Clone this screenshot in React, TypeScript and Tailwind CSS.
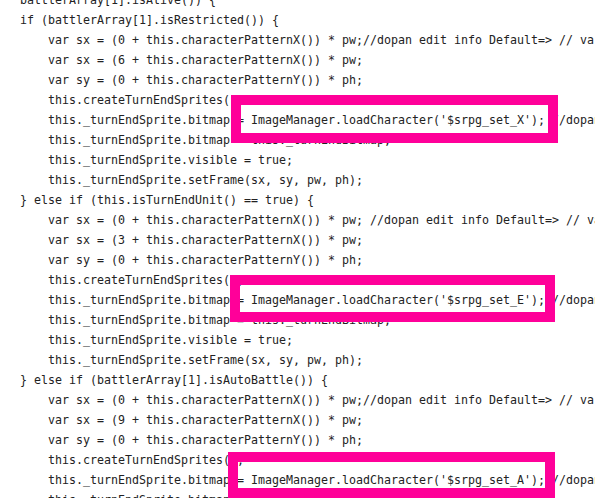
const lines: string[] = [
  "battlerArray[1].isAlive()) {",
  "if (battlerArray[1].isRestricted()) {",
  "    var sx = (0 + this.characterPatternX()) * pw;//dopan edit info Default=> // var sx = (0 + this.characterPatternX()) * pw;",
  "    var sx = (6 + this.characterPatternX()) * pw;",
  "    var sy = (0 + this.characterPatternY()) * ph;",
  "    this.createTurnEndSprites();",
  "    this._turnEndSprite.bitmap = ImageManager.loadCharacter('$srpg_set_X'); //dopan edit info",
  "    this._turnEndSprite.bitmap = this._turnEndBitmap;",
  "    this._turnEndSprite.visible = true;",
  "    this._turnEndSprite.setFrame(sx, sy, pw, ph);",
  "} else if (this.isTurnEndUnit() == true) {",
  "    var sx = (0 + this.characterPatternX()) * pw; //dopan edit info Default=> // var sx",
  "    var sx = (3 + this.characterPatternX()) * pw;",
  "    var sy = (0 + this.characterPatternY()) * ph;",
  "    this.createTurnEndSprites();",
  "    this._turnEndSprite.bitmap = ImageManager.loadCharacter('$srpg_set_E'); //dopan edit info",
  "    this._turnEndSprite.bitmap = this._turnEndBitmap;",
  "    this._turnEndSprite.visible = true;",
  "    this._turnEndSprite.setFrame(sx, sy, pw, ph);",
  "} else if (battlerArray[1].isAutoBattle()) {",
  "    var sx = (0 + this.characterPatternX()) * pw;//dopan edit info Default=> // var sx",
  "    var sx = (9 + this.characterPatternX()) * pw;",
  "    var sy = (0 + this.characterPatternY()) * ph;",
  "    this.createTurnEndSprites();",
  "    this._turnEndSprite.bitmap = ImageManager.loadCharacter('$srpg_set_A'); //dopan edit info",
  "    this._turnEndSprite.bitmap = this._turnEndBitmap;",
];

export default function App() {
  return (
    <div className="relative w-[595px] h-[498px] overflow-hidden bg-white">
      {/* code listing */}
      <div
        className="-mt-[10px] pl-[20px] text-[11.63px] text-[#222222]"
        style={{ fontFamily: "'DejaVu Sans Mono', 'Liberation Mono', monospace" }}
      >
        {lines.map((line, i) => (
          <div key={i} className="h-[20px] leading-[20px] whitespace-pre">
            {line}
          </div>
        ))}
      </div>

      {/* highlight boxes */}
      <div className="absolute left-[231px] top-[95px] w-[327px] h-[48px] border-[10px] border-[#ff0099]" />
      <div className="absolute left-[230px] top-[275px] w-[325px] h-[47px] border-[10px] border-[#ff0099]" />
      <div className="absolute left-[228px] top-[452px] w-[327px] h-[46px] border-[10px] border-[#ff0099]" />
    </div>
  );
}
